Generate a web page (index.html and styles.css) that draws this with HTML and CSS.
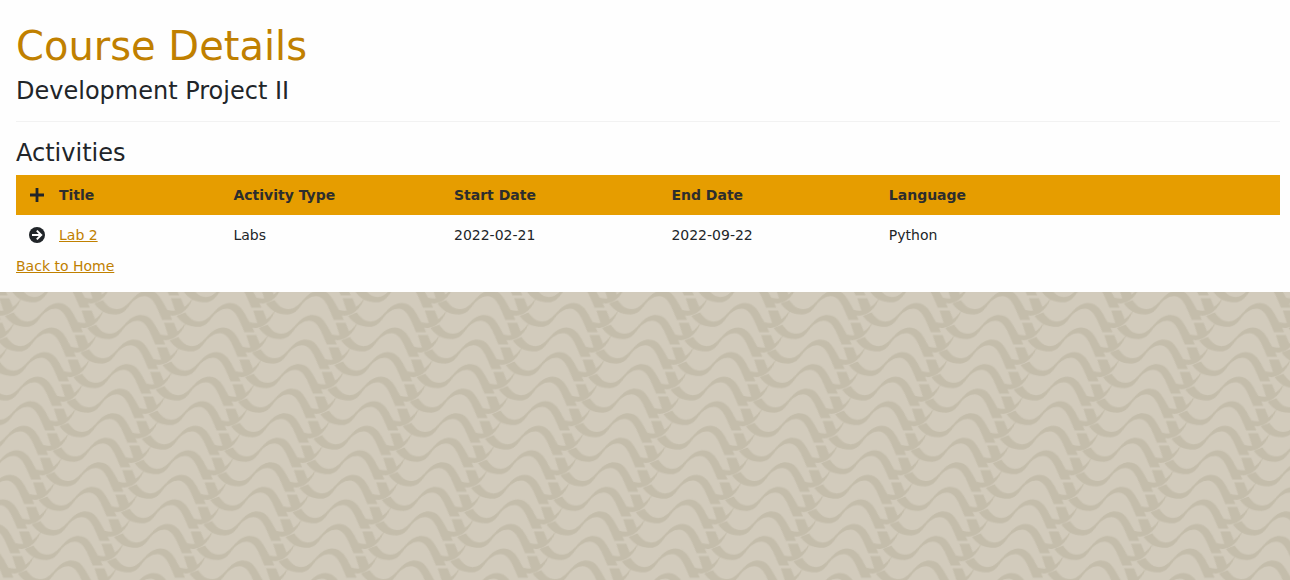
FILE: index.html
```html
<!DOCTYPE html>
<html lang="en">
<head>
<meta charset="utf-8">
<title>Course Details</title>
<link rel="stylesheet" href="styles.css">
</head>
<body>
<svg class="backdrop" aria-hidden="true">
  <defs>
    <g id="wave" transform="translate(0 -25) scale(.3333)">
      <path d="M1,98 L27,88 C38,104 50,115 68,115 C88,115 100,100 112,88 C124,74 140,59 162,59 C194,59 206,92 220,117 C250,126 280,110 298,78 C286,116 258,138 229,134 L235,147 L205,147 C191,118 180,76 152,76 C138,76 125,84 114,95 C102,108 92,131 66,131 C35,131 16,120 1,98Z"/>
      <path d="M231,82H261L274,114L244,122Z"/>
    </g>
    <g id="stack">
      <use href="#wave" x="20.85" y="-73.65"/>
      <use href="#wave" x="13.9" y="-49.1"/>
      <use href="#wave" x="6.95" y="-24.55"/>
      <use href="#wave"/>
      <use href="#wave" x="-6.95" y="24.55"/>
      <use href="#wave" x="-13.9" y="49.1"/>
      <use href="#wave" x="-20.85" y="73.65"/>
    </g>
    <pattern id="weave" patternUnits="userSpaceOnUse" x="177.7" y="345" width="171.6" height="24.55" patternTransform="matrix(1 0 -.2831 1 0 0)">
      <g class="backdrop-wave" transform="matrix(1 0 .2831 1 0 0)">
        <use href="#stack" x="-171.6"/>
        <use href="#stack" x="-89.3" y="12.3"/>
        <use href="#stack"/>
        <use href="#stack" x="82.3" y="12.3"/>
        <use href="#stack" x="171.6"/>
      </g>
    </pattern>
  </defs>
  <rect width="100%" height="100%" fill="url(#weave)"/>
</svg>
<main class="page">
  <h1 class="page-title">Course Details</h1>
  <h2 class="section-title">Development Project II</h2>
  <hr class="divider">
  <h2 class="section-title">Activities</h2>
  <table class="activities">
    <colgroup>
      <col class="col-icon"><col class="col-title"><col class="col-type"><col class="col-date"><col class="col-date"><col>
    </colgroup>
    <thead>
      <tr>
        <th><a class="icon-link" href="#" aria-label="Add activity"><svg class="icon" viewBox="0 0 16 16"><path d="M6.6 1h2.8v5.6H15v2.8H9.4V15H6.6V9.4H1V6.6h5.6z"/></svg></a></th>
        <th>Title</th><th>Activity Type</th><th>Start Date</th><th>End Date</th><th>Language</th>
      </tr>
    </thead>
    <tbody>
      <tr>
        <td><a class="icon-link" href="#" aria-label="Open Lab 2"><svg class="icon" viewBox="0 0 16 16"><circle cx="8" cy="8" r="8"/><path class="icon-arrow" d="M3 8h9M7.8 3.6L12.2 8l-4.4 4.4"/></svg></a></td>
        <td><a class="link" href="#">Lab 2</a></td><td>Labs</td><td>2022-02-21</td><td>2022-09-22</td><td>Python</td>
      </tr>
    </tbody>
  </table>
  <a class="link" href="#">Back to Home</a>
</main>
</body>
</html>
```
FILE: styles.css
```css
* { box-sizing: border-box; }
body {
  margin: 0;
  background: #d2cbbc;
  color: #212529;
  font: 14px/22px Verdana, "DejaVu Sans", sans-serif;
}
.backdrop {
  position: fixed;
  inset: 0;
  z-index: -1;
  width: 100%;
  height: 100%;
}
.backdrop-wave { fill: #c4bdab; }
.page {
  padding: 22px 10px 15px 16px;
  background: #fefefe;
}
.page-title {
  margin: 0 0 6px;
  color: #c08000;
  font-size: 40px;
  font-weight: 400;
  line-height: 48px;
}
.section-title {
  margin: 0 0 7px;
  font-size: 24px;
  font-weight: 400;
  line-height: 30px;
}
.divider {
  margin: 15px 0 16px;
  border: 0;
  border-top: 1px solid #f2f2f2;
}
.activities {
  width: 100%;
  table-layout: fixed;
  border-collapse: collapse;
}
.activities th,
.activities td {
  height: 40px;
  padding: 0 8px;
  text-align: left;
  white-space: nowrap;
}
.activities th { background: #e69d00; color: #2d2d2d; }
.col-icon { width: 35px; }
.col-title { width: 13.8%; }
.col-type { width: 17.45%; }
.col-date { width: 17.2%; }
.icon-link {
  display: flex;
  justify-content: flex-end;
  color: #212529;
}
.activities th:first-child,
.activities td:first-child { padding: 0 6px; }
.icon { width: 16px; height: 16px; fill: currentColor; }
.icon-arrow { fill: none; stroke: #fff; stroke-width: 2; }
.link { color: #c08000; text-decoration: underline; }
```
